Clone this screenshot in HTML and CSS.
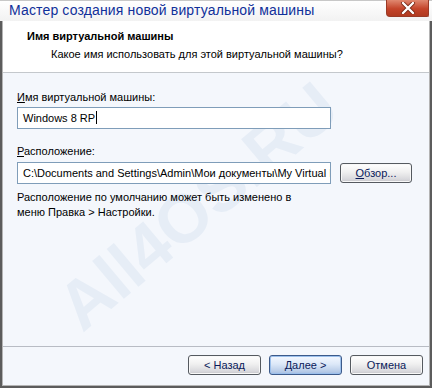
FILE: index.html
```html
<!DOCTYPE html>
<html lang="ru">
<head>
  <meta charset="UTF-8" />
  <title>Мастер создания новой виртуальной машины</title>
  <link rel="stylesheet" href="styles.css">
</head>
<body>
  <div class="window">
    <div class="titlebar">
      <span class="title">Мастер создания новой виртуальной машины</span>
      <div class="close-btn">
        <svg width="16" height="12" viewBox="0 0 16 12">
          <path d="M3 1 L13 11 M13 1 L3 11" stroke="#7a2a18" stroke-width="4" stroke-linecap="round"/>
          <path d="M3 1 L13 11 M13 1 L3 11" stroke="#ffffff" stroke-width="2.4" stroke-linecap="round"/>
        </svg>
      </div>
    </div>

    <div class="header">
      <h3 class="header-title">Имя виртуальной машины</h3>
      <p class="header-sub">Какое имя использовать для этой виртуальной машины?</p>
    </div>

    <div class="content">
      <div class="watermark">All4OS.RU</div>

      <label class="field-label"><u>И</u>мя виртуальной машины:</label>
      <div class="input-row">
        <div class="text-input">Windows 8 RP<span class="caret"></span></div>
      </div>

      <label class="field-label second"><u>Р</u>асположение:</label>
      <div class="input-row">
        <div class="text-input">C:\Documents and Settings\Admin\Мои документы\My Virtual I</div>
        <button class="btn browse"><u>О</u>бзор...</button>
      </div>

      <p class="note">Расположение по умолчанию может быть изменено в<br>меню Правка &gt; Настройки.</p>
    </div>

    <div class="footer">
      <button class="btn">&lt; Назад</button>
      <button class="btn default">Далее &gt;</button>
      <button class="btn">Отмена</button>
    </div>
  </div>
</body>
</html>
```

FILE: styles.css
```css
* {
  box-sizing: border-box;
}
body {
  margin: 0;
  font-family: 'Liberation Sans', Arial, sans-serif;
  font-size: 11px;
  color: #000;
  background: #fff;
}
.window {
  width: 432px;
  height: 388px;
  display: flex;
  flex-direction: column;
  border: 2px solid #5c5c5c;
  border-top: none;
  box-shadow: inset 1px 0 0 #b4b4b4, inset -1px 0 0 #b4b4b4, inset 0 -1px 0 #b4b4b4;
  padding: 0 1px 1px 1px;
  background: #f4f7fc;
}
.titlebar {
  height: 21px;
  display: flex;
  align-items: flex-start;
  justify-content: space-between;
  background: linear-gradient(#ffffff, #f2f2f2);
  border-top: 1px solid #c8c8c8;
  margin: 0 -3px;
  padding-left: 9px;
}
.title {
  font-size: 14px;
  line-height: 19px;
  color: #10309a;
  letter-spacing: 0.15px;
}
.close-btn {
  width: 43px;
  height: 17px;
  margin-top: -1px;
  margin-right: 3px;
  border-radius: 0 0 2px 4px;
  background: linear-gradient(#e08870, #c4442a 55%, #b03a20);
  border: 1px solid #9a3a26;
  border-top: none;
  display: flex;
  align-items: center;
  justify-content: center;
}
.header {
  height: 52px;
  background: #fff;
  border-bottom: 1px solid #c4c8cc;
  padding: 8px 0 0 24px;
}
.header-title {
  margin: 0;
  font-size: 11px;
  font-weight: bold;
  line-height: 14px;
}
.header-sub {
  margin: 4px 0 0 24px;
  line-height: 14px;
}
.content {
  position: relative;
  flex: 1;
  padding: 17px 0 0 14px;
  overflow: hidden;
}
.field-label {
  display: block;
  position: relative;
  line-height: 14px;
  margin-bottom: 3px;
}
.field-label.second {
  margin-top: 15px;
  margin-bottom: 4px;
}
.input-row {
  display: flex;
  align-items: center;
  gap: 9px;
  position: relative;
}
.text-input {
  width: 314px;
  height: 22px;
  background: #fff;
  border: 1px solid #7f9db9;
  padding: 0 5px;
  line-height: 20px;
  white-space: nowrap;
  overflow: hidden;
}
.caret {
  display: inline-block;
  width: 1px;
  height: 13px;
  background: #000;
  vertical-align: -2px;
  margin-left: 1px;
}
.note {
  margin: 6px 0 0;
  line-height: 15px;
  position: relative;
}
.btn {
  width: 73px;
  height: 20px;
  font-family: 'Liberation Sans', Arial, sans-serif;
  font-size: 11px;
  color: #0a1a5a;
  border: 1px solid #555a60;
  border-radius: 3px;
  background: linear-gradient(#ffffff, #f0f0f0 45%, #d8d8dc 85%, #c4c4c8);
  box-shadow: inset 0 0 0 1px #f8f8f8;
  padding: 0;
  cursor: pointer;
}
.btn.browse {
  width: 72px;
}
.btn.default {
  border-color: #3c5a8a;
  background: linear-gradient(#f4f8ff, #dce8f8 45%, #b8cce8 85%, #a4bce0);
  box-shadow: inset 0 0 0 1px #9cc0ec;
}
.footer {
  height: 39px;
  border-top: 1px solid #b8bcc4;
  display: flex;
  justify-content: flex-end;
  align-items: flex-start;
  gap: 8px;
  padding: 8px 6px 0 0;
}
.watermark {
  position: absolute;
  left: 86px;
  top: 200px;
  font-family: 'Liberation Sans', Arial, sans-serif;
  font-size: 68px;
  font-weight: bold;
  line-height: 1;
  color: #e6edf6;
  transform: rotate(-40deg);
  transform-origin: left bottom;
  white-space: nowrap;
}
```
